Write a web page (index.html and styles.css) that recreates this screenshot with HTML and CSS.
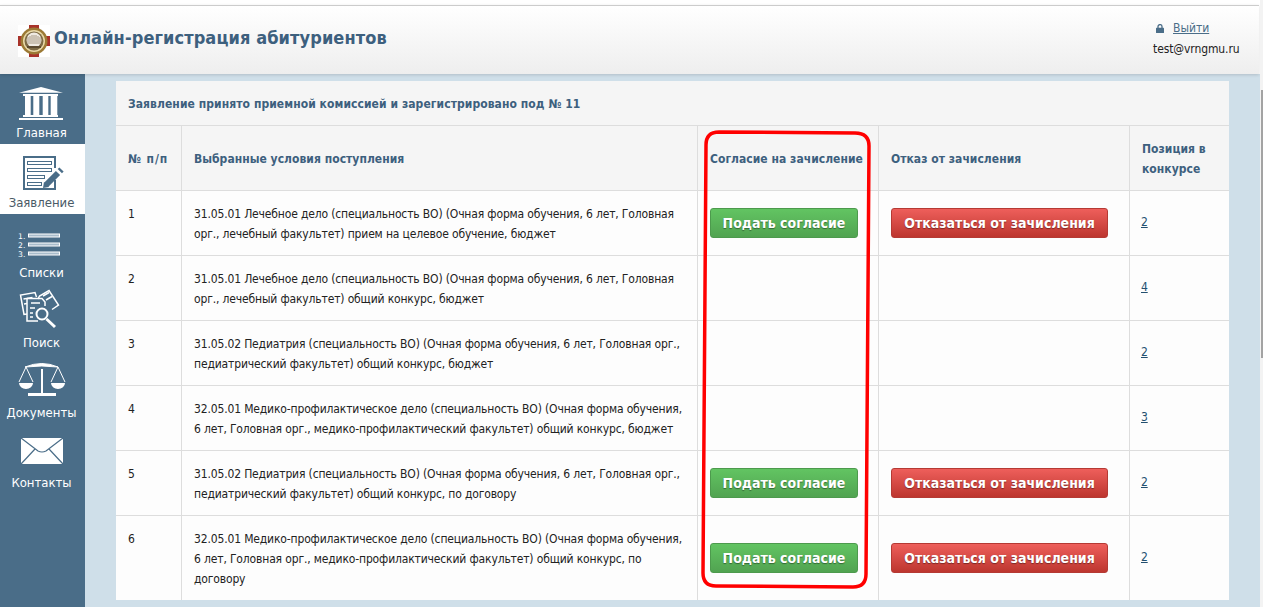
FILE: index.html
```html
<!DOCTYPE html>
<html lang="ru">
<head>
<meta charset="utf-8">
<title>Онлайн-регистрация абитуриентов</title>
<link rel="stylesheet" href="styles.css">
</head>
<body>
<header class="topbar">
  <div class="brand">
    <svg class="logo" width="32" height="32" viewBox="0 0 32 32">
      <rect width="32" height="32" fill="#fff"/>
      <rect x="11" y="0" width="10" height="32" fill="#a8322a"/>
      <rect x="0" y="11" width="32" height="10" fill="#a8322a"/>
      <circle cx="16" cy="16" r="13.5" fill="#9c7a35"/>
      <circle cx="16" cy="16" r="11" fill="#e9d9a8"/>
      <circle cx="16" cy="16" r="9.5" fill="#7d6a45"/>
      <circle cx="16" cy="15" r="7.5" fill="#efeae2"/>
      <path d="M10 19v-7M12 19v-8M14 19v-9M16 19v-9M18 19v-9M20 19v-8M22 19v-7" stroke="#a89a86" stroke-width="1"/>
      <path d="M9 22h14" stroke="#5b4a30" stroke-width="2"/>
    </svg>
    <h1 class="brand-title">Онлайн-регистрация абитуриентов</h1>
  </div>
  <div class="account">
    <div class="logout">
      <svg class="lock" width="8" height="9" viewBox="0 0 8 9"><path d="M2 4V2.600a2 2 0 0 1 4 0V4" fill="none" stroke="#4a6d88" stroke-width="1.300"/><rect y="3.800" width="8" height="5.200" rx=".6" fill="#4a6d88"/></svg>
      <a class="logout-link" href="#">Выйти</a>
    </div>
    <div class="email">test@vrngmu.ru</div>
  </div>
</header>
<div class="main">
  <nav class="sidebar">
    <a class="nav-item" href="#">
      <svg class="nav-icon" width="85" height="48" viewBox="0 0 85 48">
        <path d="M19 18.700 L41 13 L63 18.700 Z" fill="#fff"/>
        <rect x="23" y="20" width="35" height="2" fill="#fff"/>
        <path d="M25 22h5.700v19h-5.700zM33.300 22h6v19h-6zM42.700 22h5.600v19h-5.600zM50.700 22h6.600v19h-6.600z" fill="#fff"/>
        <rect x="23" y="41" width="35" height="2" fill="#fff"/>
        <rect x="19" y="44" width="44" height="2" fill="#fff"/>
      </svg>
      <span class="nav-label">Главная</span>
    </a>
    <a class="nav-item nav-item-active" href="#">
      <svg class="nav-icon" width="85" height="48" viewBox="0 0 85 48">
        <g fill="none" stroke="#4a6d88">
          <path d="M55 24V13H24V45H55V36" stroke-width="2"/>
          <rect x="27.500" y="17.500" width="24" height="3"/>
          <rect x="27.500" y="24.500" width="24" height="3"/>
          <rect x="27.500" y="31.500" width="17" height="3"/>
          <rect x="27.500" y="38.500" width="14" height="3"/>
        </g>
        <path d="M46 41 L58 29" stroke="#4a6d88" stroke-width="6"/>
        <path d="M59.800 27.200 L61.500 25.500" stroke="#4a6d88" stroke-width="6"/>
        <path d="M43 44 L44 38 L49 43 Z" fill="#4a6d88"/>
      </svg>
      <span class="nav-label">Заявление</span>
    </a>
    <a class="nav-item" href="#">
      <svg class="nav-icon" width="85" height="48" viewBox="0 0 85 48">
        <text class="list-num" x="18" y="24.500">1.</text>
        <text class="list-num" x="18" y="33.500">2.</text>
        <text class="list-num" x="18" y="42.500">3.</text>
        <g fill="#a9bccb" stroke="#fff"><rect x="28.500" y="20" width="31" height="3"/><rect x="28.500" y="29" width="31" height="3"/><rect x="28.500" y="38" width="31" height="3"/></g>
      </svg>
      <span class="nav-label">Списки</span>
    </a>
    <a class="nav-item" href="#">
      <svg class="nav-icon" width="85" height="48" viewBox="0 0 85 48">
        <g fill="none" stroke="#fff" stroke-width="1.500">
          <path d="M27 30 L24 30.500 L20.500 11 L35 8.500 L36.500 13"/>
          <path d="M38 15 L39.500 12 L49 6.500 L58.500 21 L52 25.500"/>
          <path d="M27 14.500 H42 L45 18 V22 M27 14.500 V37 H38"/>
          <circle cx="42" cy="30" r="5.500" stroke-width="2"/>
          <path d="M23.500 15l9-1.500M24 20l3-.5M43 12l6-3.500M46 16l6-3.500M31 19h9M30 24h5M30 29h3M30 33h3"/>
        </g>
        <path d="M46.500 35 L55 43" stroke="#fff" stroke-width="3"/>
      </svg>
      <span class="nav-label">Поиск</span>
    </a>
    <a class="nav-item" href="#">
      <svg class="nav-icon" width="85" height="48" viewBox="0 0 85 48">
        <path d="M25 13 Q42 6 58 13 Q42 11 25 13Z" fill="#fff" stroke="#fff"/>
        <rect x="41" y="15" width="2" height="24" fill="#fff"/>
        <rect x="28" y="39" width="28" height="3" fill="#fff"/>
        <path d="M19 28 L26 13 L33 28 M51 28 L58 13 L65 28" fill="none" stroke="#fff"/>
        <path d="M19 29 H33 A7 6 0 0 1 19 29Z M51 29 H65 A7 6 0 0 1 51 29Z" fill="#fff"/>
      </svg>
      <span class="nav-label">Документы</span>
    </a>
    <a class="nav-item" href="#">
      <svg class="nav-icon" width="85" height="48" viewBox="0 0 85 48">
        <rect x="21" y="14" width="42" height="26" fill="#fff"/>
        <path d="M21 14 L38 27 Q42 29 46 27 L63 14 M21 40 L35 25 M63 40 L49 25" fill="none" stroke="#4a6d88" stroke-width="1.200"/>
      </svg>
      <span class="nav-label">Контакты</span>
    </a>
  </nav>
  <main class="content">
    <section class="card">
      <div class="card-title">Заявление принято приемной комиссией и зарегистрировано под № 11</div>
      <table class="grid">
        <colgroup><col class="col-num"><col class="col-cond"><col class="col-agree"><col class="col-refuse"><col class="col-pos"></colgroup>
        <thead>
          <tr><th class="th-num">№ п/п</th><th>Выбранные условия поступления</th><th>Согласие на зачисление</th><th>Отказ от зачисления</th><th>Позиция в конкурсе</th></tr>
        </thead>
        <tbody>
          <tr>
            <td>1</td>
            <td>31.05.01 Лечебное дело (специальность ВО) (Очная форма обучения, 6 лет, Головная орг., лечебный факультет) прием на целевое обучение, бюджет</td>
            <td class="cell-mid"><a class="btn btn-green" href="#">Подать согласие</a></td>
            <td class="cell-mid"><a class="btn btn-red" href="#">Отказаться от зачисления</a></td>
            <td class="cell-mid"><a class="pos" href="#">2</a></td>
          </tr>
          <tr>
            <td>2</td>
            <td>31.05.01 Лечебное дело (специальность ВО) (Очная форма обучения, 6 лет, Головная орг., лечебный факультет) общий конкурс, бюджет</td>
            <td></td><td></td>
            <td class="cell-mid"><a class="pos" href="#">4</a></td>
          </tr>
          <tr>
            <td>3</td>
            <td>31.05.02 Педиатрия (специальность ВО) (Очная форма обучения, 6 лет, Головная орг., педиатрический факультет) общий конкурс, бюджет</td>
            <td></td><td></td>
            <td class="cell-mid"><a class="pos" href="#">2</a></td>
          </tr>
          <tr>
            <td>4</td>
            <td>32.05.01 Медико-профилактическое дело (специальность ВО) (Очная форма обучения, 6 лет, Головная орг., медико-профилактический факультет) общий конкурс, бюджет</td>
            <td></td><td></td>
            <td class="cell-mid"><a class="pos" href="#">3</a></td>
          </tr>
          <tr>
            <td>5</td>
            <td>31.05.02 Педиатрия (специальность ВО) (Очная форма обучения, 6 лет, Головная орг., педиатрический факультет) общий конкурс, по договору</td>
            <td class="cell-mid"><a class="btn btn-green" href="#">Подать согласие</a></td>
            <td class="cell-mid"><a class="btn btn-red" href="#">Отказаться от зачисления</a></td>
            <td class="cell-mid"><a class="pos" href="#">2</a></td>
          </tr>
          <tr>
            <td>6</td>
            <td>32.05.01 Медико-профилактическое дело (специальность ВО) (Очная форма обучения, 6 лет, Головная орг., медико-профилактический факультет) общий конкурс, по договору</td>
            <td class="cell-mid"><a class="btn btn-green" href="#">Подать согласие</a></td>
            <td class="cell-mid"><a class="btn btn-red" href="#">Отказаться от зачисления</a></td>
            <td class="cell-mid"><a class="pos" href="#">2</a></td>
          </tr>
        </tbody>
      </table>
    </section>
  </main>
</div>
<svg class="annotation" width="180" height="470" viewBox="0 0 180 470">
  <path d="M16 2 L152 3 Q166 3 166 16 L163 444 Q163 457 150 457 L13 456 Q0 456 0 443 L3 15 Q3 2 16 2 Z" fill="none" stroke="#f00" stroke-width="3.500"/>
</svg>
<div class="scrollbar"><div class="scroll-thumb"></div></div>
</body>
</html>
```
FILE: styles.css
```css
* { box-sizing: border-box; }
html, body { margin: 0; height: 607px; overflow: hidden; }
body {
  position: relative;
  display: flex;
  flex-direction: column;
  background: #fff;
  padding-top: 5px;
  font-family: "DejaVu Sans Condensed", "DejaVu Sans", sans-serif;
  font-size: 12px;
  line-height: 20px;
  color: #222;
}
.topbar {
  flex: none;
  height: 69px;
  margin-right: 4px;
  border-top: 1px solid #ccc;
  background: linear-gradient(#ffffff, #eeeeee);
  box-shadow: 0 1px 3px rgba(0,0,0,.15);
  display: flex;
  justify-content: space-between;
  position: relative;
  z-index: 2;
}
.brand { display: flex; align-items: center; padding: 1px 0 0 18px; gap: 4px; }
.logo { display: block; }
.brand-title {
  margin: 0 0 6px;
  font-size: 18px;
  line-height: 24px;
  letter-spacing: .1px;
  font-weight: bold;
  color: #3d607e;
}
.account { padding: 12px 20px 0 0; width: 86px; box-sizing: content-box; }
.logout { display: flex; align-items: center; gap: 9px; padding-left: 3px; height: 20px; }
.lock { display: block; }
.logout-link { color: #4a6d88; text-decoration: underline; }
.email { margin-top: 1px; color: #222; letter-spacing: -.1px; white-space: nowrap; }
.main { flex: 1; display: flex; min-height: 0; margin-right: 3px; background: #cfdfe9; }
.sidebar { flex: none; width: 85px; background: #4a6d88; }
.nav-item {
  display: block;
  height: 70px;
  color: #fff;
  text-decoration: none;
  text-align: center;
}
.nav-item-active { background: #fff; color: #4a5a66; }
.nav-icon { display: block; }
.nav-label {
  display: block;
  font-size: 13px;
  line-height: 20px;
  margin-top: 1px;
  padding-right: 2px;
}
.list-num { font-size: 7.7px; fill: #fff; font-family: "DejaVu Sans", sans-serif; }
.content { flex: 1; padding: 7px 31px 0 31px; min-width: 0; }
.card { background: #fdfdfd; height: 519px; }
.card-title {
  height: 44px;
  background: #f5f5f5;
  padding: 13px 12px 11px;
  font-weight: bold;
  letter-spacing: .07px;
  color: #3d607e;
}
.grid { width: 1113px; table-layout: fixed; border-collapse: separate; border-spacing: 0; }
.col-num { width: 65px; }
.col-cond { width: 516px; }
.col-agree { width: 181px; }
.col-refuse { width: 251px; }
.col-pos { width: 100px; }
.grid th, .grid td { border-top: 1px solid #ddd; border-left: 1px solid #ddd; padding: 13px 12px 11px; }
.grid th:first-child, .grid td:first-child { border-left: 0; }
.grid th {
  background: #f5f5f5;
  text-align: left;
  font-weight: bold;
  letter-spacing: .03px;
  color: #3d607e;
  vertical-align: middle;
}
.grid th.th-num { letter-spacing: .9px; }
.grid td { vertical-align: top; color: #222; letter-spacing: -.15px; }
.grid td.cell-mid { vertical-align: middle; padding-top: 12px; padding-bottom: 12px; }
.btn {
  display: block;
  height: 30px;
  line-height: 28px;
  border-radius: 3px;
  text-align: center;
  font-size: 14px;
  font-weight: bold;
  letter-spacing: 0;
  color: #fff;
  text-decoration: none;
  text-shadow: 0 1px 1px rgba(0,0,0,.4);
}
.btn-green { width: 148px; background: linear-gradient(#62c462, #51a351); border: 1px solid #4d9a4d; }
.btn-red { width: 217px; background: linear-gradient(#ee5f5b, #bd362f); border: 1px solid #b53a34; }
.pos { color: #24506f; text-decoration: underline; position: relative; left: -1px; top: -1px; }
.annotation { position: absolute; left: 703px; top: 130px; overflow: visible; z-index: 3; pointer-events: none; }
.scrollbar { position: absolute; right: 0; top: 0; bottom: 0; width: 3px; background: #f3f3f3; z-index: 3; }
.scroll-thumb { margin: 90px 0 0 1px; width: 2px; height: 268px; background: #a3a3a3; }
```
